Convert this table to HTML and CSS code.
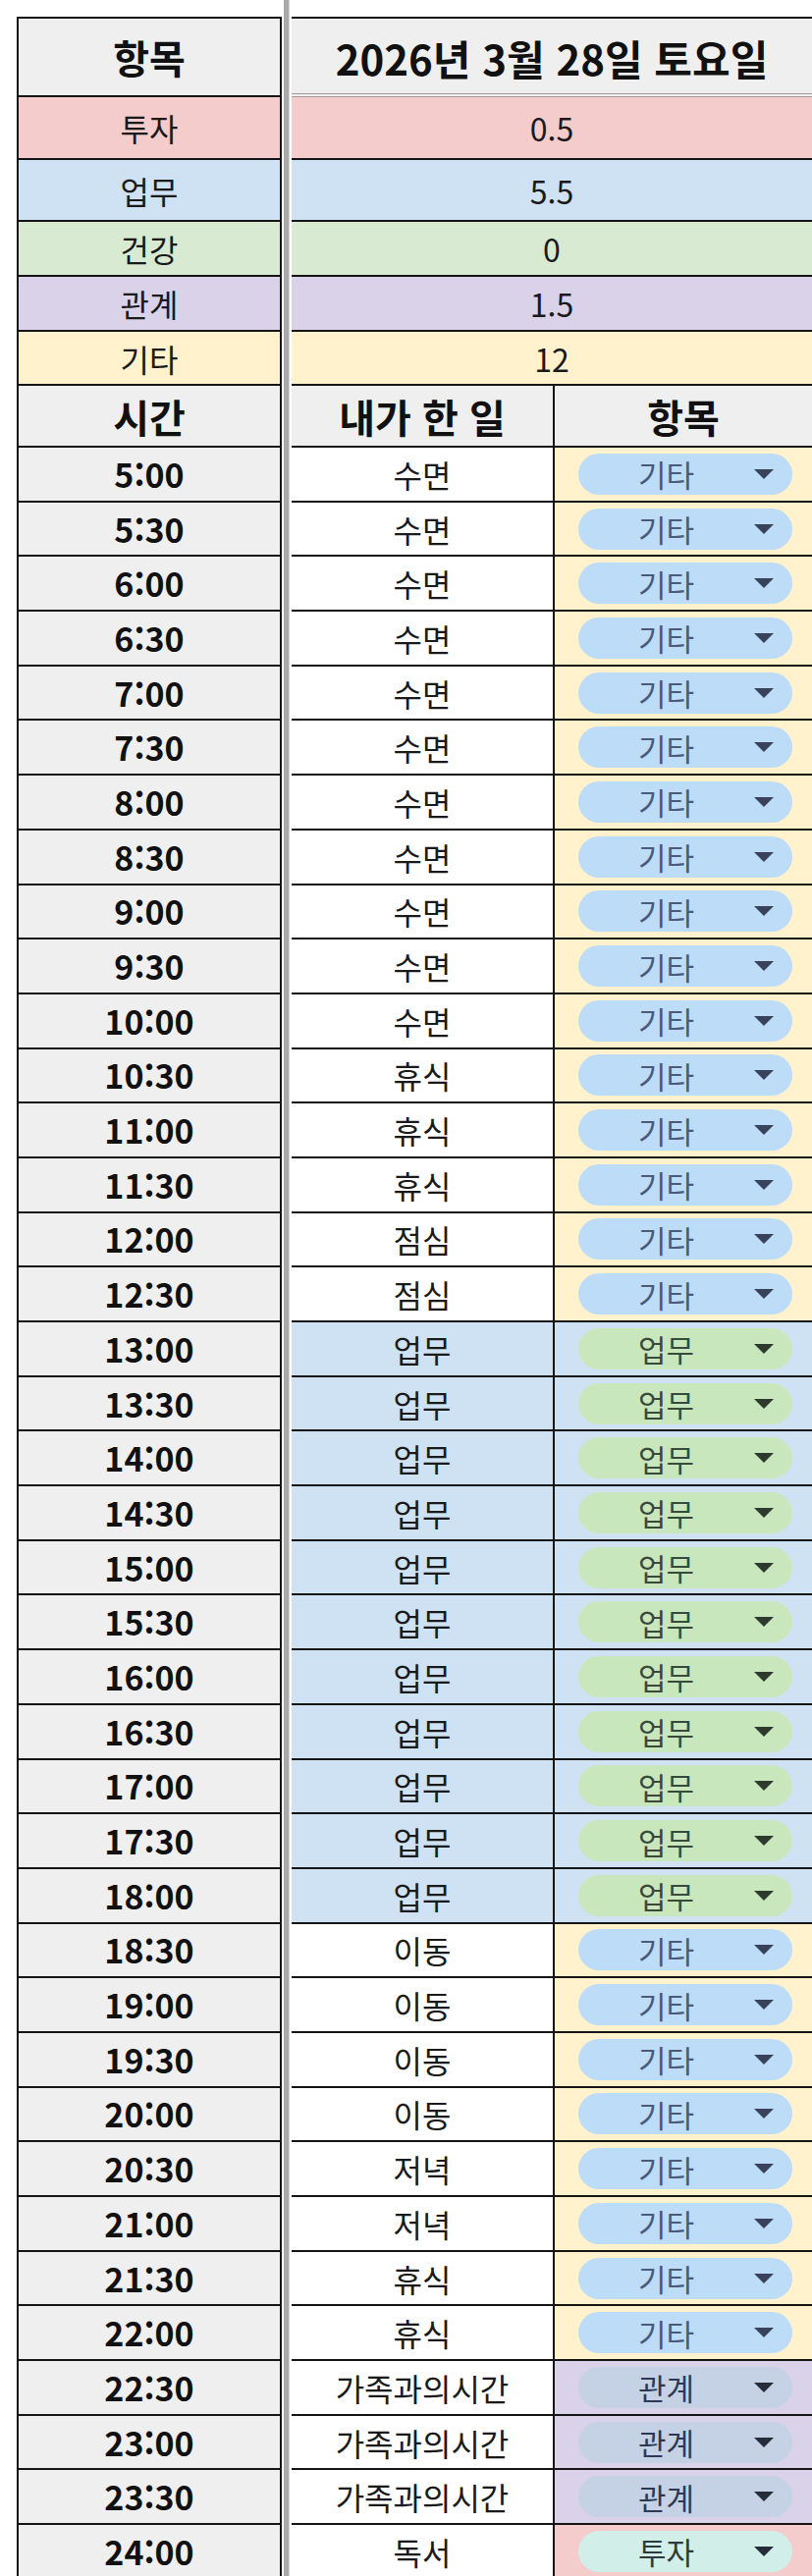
FILE: index.html
```html
<!DOCTYPE html>
<html lang="ko">
<head>
<meta charset="utf-8">
<title>시간 기록</title>
<link rel="stylesheet" href="styles.css">
</head>
<body>
<div class="sheet">
  <div class="divider"></div>

  <div class="c a head top">항목</div>
  <div class="c bc head top date-head">2026년 3월 28일 토요일</div>

  <div class="c a pink">투자</div><div class="c bc pink">0.5</div>
  <div class="c a blue">업무</div><div class="c bc blue">5.5</div>
  <div class="c a green">건강</div><div class="c bc green">0</div>
  <div class="c a purple">관계</div><div class="c bc purple">1.5</div>
  <div class="c a yellow">기타</div><div class="c bc yellow">12</div>

  <div class="c a head">시간</div><div class="c b head">내가 한 일</div><div class="c x head">항목</div>

  <div class="c a time">5:00</div><div class="c b">수면</div><div class="c x cat yellow"><span class="chip gita"><span class="lbl">기타</span><i class="arr"></i></span></div>
  <div class="c a time">5:30</div><div class="c b">수면</div><div class="c x cat yellow"><span class="chip gita"><span class="lbl">기타</span><i class="arr"></i></span></div>
  <div class="c a time">6:00</div><div class="c b">수면</div><div class="c x cat yellow"><span class="chip gita"><span class="lbl">기타</span><i class="arr"></i></span></div>
  <div class="c a time">6:30</div><div class="c b">수면</div><div class="c x cat yellow"><span class="chip gita"><span class="lbl">기타</span><i class="arr"></i></span></div>
  <div class="c a time">7:00</div><div class="c b">수면</div><div class="c x cat yellow"><span class="chip gita"><span class="lbl">기타</span><i class="arr"></i></span></div>
  <div class="c a time">7:30</div><div class="c b">수면</div><div class="c x cat yellow"><span class="chip gita"><span class="lbl">기타</span><i class="arr"></i></span></div>
  <div class="c a time">8:00</div><div class="c b">수면</div><div class="c x cat yellow"><span class="chip gita"><span class="lbl">기타</span><i class="arr"></i></span></div>
  <div class="c a time">8:30</div><div class="c b">수면</div><div class="c x cat yellow"><span class="chip gita"><span class="lbl">기타</span><i class="arr"></i></span></div>
  <div class="c a time">9:00</div><div class="c b">수면</div><div class="c x cat yellow"><span class="chip gita"><span class="lbl">기타</span><i class="arr"></i></span></div>
  <div class="c a time">9:30</div><div class="c b">수면</div><div class="c x cat yellow"><span class="chip gita"><span class="lbl">기타</span><i class="arr"></i></span></div>
  <div class="c a time">10:00</div><div class="c b">수면</div><div class="c x cat yellow"><span class="chip gita"><span class="lbl">기타</span><i class="arr"></i></span></div>
  <div class="c a time">10:30</div><div class="c b">휴식</div><div class="c x cat yellow"><span class="chip gita"><span class="lbl">기타</span><i class="arr"></i></span></div>
  <div class="c a time">11:00</div><div class="c b">휴식</div><div class="c x cat yellow"><span class="chip gita"><span class="lbl">기타</span><i class="arr"></i></span></div>
  <div class="c a time">11:30</div><div class="c b">휴식</div><div class="c x cat yellow"><span class="chip gita"><span class="lbl">기타</span><i class="arr"></i></span></div>
  <div class="c a time">12:00</div><div class="c b">점심</div><div class="c x cat yellow"><span class="chip gita"><span class="lbl">기타</span><i class="arr"></i></span></div>
  <div class="c a time">12:30</div><div class="c b">점심</div><div class="c x cat yellow"><span class="chip gita"><span class="lbl">기타</span><i class="arr"></i></span></div>
  <div class="c a time">13:00</div><div class="c b blue">업무</div><div class="c x cat blue"><span class="chip upmu"><span class="lbl">업무</span><i class="arr"></i></span></div>
  <div class="c a time">13:30</div><div class="c b blue">업무</div><div class="c x cat blue"><span class="chip upmu"><span class="lbl">업무</span><i class="arr"></i></span></div>
  <div class="c a time">14:00</div><div class="c b blue">업무</div><div class="c x cat blue"><span class="chip upmu"><span class="lbl">업무</span><i class="arr"></i></span></div>
  <div class="c a time">14:30</div><div class="c b blue">업무</div><div class="c x cat blue"><span class="chip upmu"><span class="lbl">업무</span><i class="arr"></i></span></div>
  <div class="c a time">15:00</div><div class="c b blue">업무</div><div class="c x cat blue"><span class="chip upmu"><span class="lbl">업무</span><i class="arr"></i></span></div>
  <div class="c a time">15:30</div><div class="c b blue">업무</div><div class="c x cat blue"><span class="chip upmu"><span class="lbl">업무</span><i class="arr"></i></span></div>
  <div class="c a time">16:00</div><div class="c b blue">업무</div><div class="c x cat blue"><span class="chip upmu"><span class="lbl">업무</span><i class="arr"></i></span></div>
  <div class="c a time">16:30</div><div class="c b blue">업무</div><div class="c x cat blue"><span class="chip upmu"><span class="lbl">업무</span><i class="arr"></i></span></div>
  <div class="c a time">17:00</div><div class="c b blue">업무</div><div class="c x cat blue"><span class="chip upmu"><span class="lbl">업무</span><i class="arr"></i></span></div>
  <div class="c a time">17:30</div><div class="c b blue">업무</div><div class="c x cat blue"><span class="chip upmu"><span class="lbl">업무</span><i class="arr"></i></span></div>
  <div class="c a time">18:00</div><div class="c b blue">업무</div><div class="c x cat blue"><span class="chip upmu"><span class="lbl">업무</span><i class="arr"></i></span></div>
  <div class="c a time">18:30</div><div class="c b">이동</div><div class="c x cat yellow"><span class="chip gita"><span class="lbl">기타</span><i class="arr"></i></span></div>
  <div class="c a time">19:00</div><div class="c b">이동</div><div class="c x cat yellow"><span class="chip gita"><span class="lbl">기타</span><i class="arr"></i></span></div>
  <div class="c a time">19:30</div><div class="c b">이동</div><div class="c x cat yellow"><span class="chip gita"><span class="lbl">기타</span><i class="arr"></i></span></div>
  <div class="c a time">20:00</div><div class="c b">이동</div><div class="c x cat yellow"><span class="chip gita"><span class="lbl">기타</span><i class="arr"></i></span></div>
  <div class="c a time">20:30</div><div class="c b">저녁</div><div class="c x cat yellow"><span class="chip gita"><span class="lbl">기타</span><i class="arr"></i></span></div>
  <div class="c a time">21:00</div><div class="c b">저녁</div><div class="c x cat yellow"><span class="chip gita"><span class="lbl">기타</span><i class="arr"></i></span></div>
  <div class="c a time">21:30</div><div class="c b">휴식</div><div class="c x cat yellow"><span class="chip gita"><span class="lbl">기타</span><i class="arr"></i></span></div>
  <div class="c a time">22:00</div><div class="c b">휴식</div><div class="c x cat yellow"><span class="chip gita"><span class="lbl">기타</span><i class="arr"></i></span></div>
  <div class="c a time">22:30</div><div class="c b">가족과의시간</div><div class="c x cat purple"><span class="chip gwan"><span class="lbl">관계</span><i class="arr"></i></span></div>
  <div class="c a time">23:00</div><div class="c b">가족과의시간</div><div class="c x cat purple"><span class="chip gwan"><span class="lbl">관계</span><i class="arr"></i></span></div>
  <div class="c a time">23:30</div><div class="c b">가족과의시간</div><div class="c x cat purple"><span class="chip gwan"><span class="lbl">관계</span><i class="arr"></i></span></div>
  <div class="c a time">24:00</div><div class="c b">독서</div><div class="c x cat pink"><span class="chip tuja"><span class="lbl">투자</span><i class="arr"></i></span></div>
</div>
</body>
</html>
```

FILE: styles.css
```css
* { box-sizing: border-box; }

html, body {
  margin: 0;
  background: #ffffff;
}

body {
  width: 827px;
  overflow: hidden;
  font-family: "Noto Sans CJK KR", "Noto Sans", sans-serif;
  color: #1a1a1a;
}

.sheet {
  display: grid;
  padding-top: 17px;
  padding-left: 17px;
  grid-template-columns: 270px 10px 268px 262px;
  grid-template-rows: 82px 64px 63px 56px 56px 55px 63px repeat(39, 55.7px);
}

.divider {
  grid-column: 2;
  grid-row: 1 / -1;
  margin-top: -17px;
  background: linear-gradient(to right, #ffffff 0 2px, #a9a9a9 2px 7px, #d6d6d6 7px 8px, #ffffff 8px);
}

.c {
  display: flex;
  align-items: center;
  justify-content: center;
  border-bottom: 2px solid #141414;
  font-size: 32px;
  line-height: 1;
  white-space: nowrap;
  background: #ffffff;
}

.a {
  grid-column: 1;
  border-left: 2px solid #141414;
  border-right: 2px solid #141414;
}

.b {
  grid-column: 3;
  border-right: 2px solid #141414;
}

.x { grid-column: 4; }

.bc { grid-column: 3 / 5; }

.top { border-top: 2px solid #141414; }

.head {
  background: #efefef;
  font-weight: 700;
  font-size: 40px;
  color: #111111;
}

.date-head {
  border-bottom: 4px double #a39a9a;
  padding-top: 4px;
  font-size: 42px;
}

.pink { background: #f4cccc; }
.blue { background: #cfe2f3; }
.green { background: #d9ead3; }
.purple { background: #d9d2e9; }
.yellow { background: #fff2cc; }

.time {
  background: #efefef;
  font-weight: 700;
  font-size: 34px;
  color: #111111;
}

.cat { justify-content: flex-start; }

.chip {
  width: 218px;
  height: 42px;
  margin-left: 24px;
  border-radius: 21px;
  display: flex;
  align-items: center;
  padding-right: 19px;
  font-size: 31px;
}

.chip .lbl {
  flex: 1;
  text-align: center;
}

.chip .arr {
  width: 0;
  height: 0;
  border-left: 10px solid transparent;
  border-right: 10px solid transparent;
  border-top: 10px solid #38425a;
}

.gita { background: #bddcf8; color: #4a5a78; }
.upmu { background: #c9e7bd; color: #3a4a3a; }
.upmu .arr { border-top-color: #2f3a2f; }
.gwan { background: #c5d1e5; color: #2d3954; }
.tuja { background: #d2eee8; color: #2f3b3b; }
.tuja .arr, .gwan .arr { border-top-color: #262c3a; }
```
